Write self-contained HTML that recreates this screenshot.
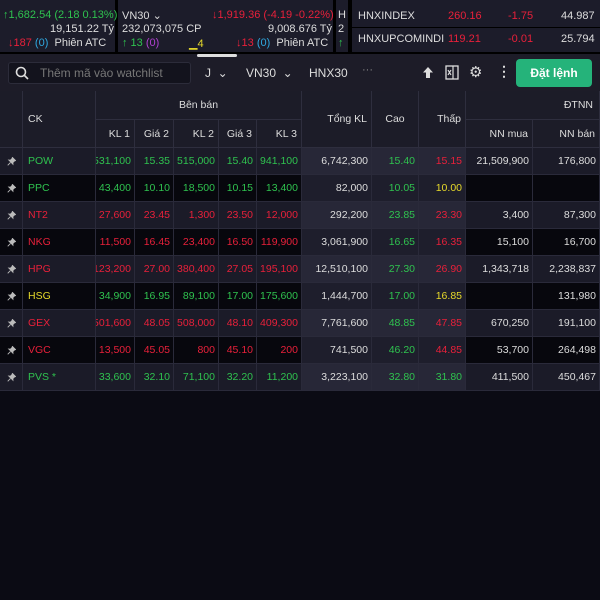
<!DOCTYPE html><html><head><meta charset="utf-8"><style>
*{margin:0;padding:0;box-sizing:border-box}
body{width:600px;height:600px;background:#0b0b14;font-family:"Liberation Sans",sans-serif;font-size:11px;color:#ddd;position:relative;overflow:hidden}
.a{position:absolute}
.p{background:#1c1c2a;position:absolute}
.g{color:#2fc24f}.r{color:#e8203a}.y{color:#e6d92a}.b{color:#2fa8e0}.v{color:#b040d0}
.row{position:absolute;left:0;width:600px;height:27px;display:flex;border-bottom:1px solid #2a2a3a;font-size:10.5px}
.row div{height:26px;line-height:26px;display:flex;justify-content:flex-end;padding-right:3px;border-right:1px solid #2a2a3a;white-space:nowrap;overflow:hidden}
.row div.ck{justify-content:flex-start;padding-left:5px}
.row div.pin{justify-content:center;align-items:center;padding:0}
.o{background:#1b1b28}.e{background:#07070d}
.o .m{background:#272737}.e .m{background:#1e1e2c}
.hd{position:absolute;border-right:1px solid #2e2e3e;border-bottom:1px solid #2e2e3e;text-align:center;color:#ddd;font-size:10.5px}
</style></head><body>
<svg width="0" height="0" style="position:absolute"><symbol id="pn" viewBox="0 0 10 10"><path d="M6 0.5L9.5 4 8.3 4.4 6.5 6.2 6.6 8 2 3.4 3.8 3.5 5.6 1.7Z M3.8 6.2L0.8 9.2" fill="#bbb" stroke="#bbb" stroke-width="1"/></symbol></svg>
<div class="a" style="left:0;top:0;width:600px;height:54px;background:#000"></div>
<div class="p" style="left:0;top:0;width:115px;height:52px"></div>
<div class="a g" style="left:3px;top:9px">↑1,682.54 (2.18 0.13%)</div>
<div class="a" style="left:50px;top:23px">19,151.22 Tỷ</div>
<div class="a" style="left:8px;top:37px"><span class="r">↓187</span> <span class="b">(0)</span> &nbsp;Phiên ATC</div>
<div class="p" style="left:118px;top:0;width:215px;height:52px"></div>
<div class="a" style="left:122px;top:9px">VN30 ⌄</div>
<div class="a r" style="left:212px;top:9px">↓1,919.36 (-4.19 -0.22%)</div>
<div class="a" style="left:122px;top:23px">232,073,075 CP</div>
<div class="a" style="left:268px;top:23px">9,008.676 Tỷ</div>
<div class="a" style="left:122px;top:37px"><span class="g">↑ 13</span> <span class="v">(0)</span></div>
<div class="a y" style="left:189px;top:37px">▁4</div>
<div class="a" style="left:236px;top:37px"><span class="r">↓13</span> <span class="b">(0)</span> &nbsp;Phiên ATC</div>
<div class="p" style="left:336px;top:0;width:12px;height:52px"></div>
<div class="a" style="left:338px;top:9px">H</div><div class="a" style="left:338px;top:23px">2</div><div class="a g" style="left:338px;top:37px">↑</div>
<div class="p" style="left:352px;top:0;width:248px;height:52px"></div>
<div class="a" style="left:352px;top:27px;width:248px;height:1px;background:#000"></div>
<div class="a" style="left:358px;top:10px">HNXINDEX</div><div class="a r" style="left:448px;top:10px">260.16</div><div class="a r" style="left:508px;top:10px">-1.75</div><div class="a" style="left:561px;top:10px">44.987</div>
<div class="a" style="left:358px;top:33px">HNXUPCOMINDI</div><div class="a r" style="left:448px;top:33px">119.21</div><div class="a r" style="left:508px;top:33px">-0.01</div><div class="a" style="left:561px;top:33px">25.794</div>
<div class="a" style="left:0;top:54px;width:600px;height:37px;background:#1d1c28"></div>
<div class="a" style="left:197px;top:54px;width:40px;height:3px;background:#ddd;border-radius:2px"></div>
<div class="a" style="left:8px;top:62px;width:183px;height:22px;background:#13131d;border:1px solid #2c2c3a;border-radius:3px"></div>
<svg class="a" style="left:15px;top:66px" width="14" height="14"><circle cx="6" cy="6" r="4.5" stroke="#ddd" stroke-width="1.6" fill="none"/><path d="M9.5 9.5L13 13" stroke="#ddd" stroke-width="1.6"/></svg>
<div class="a" style="left:40px;top:66px;color:#777;font-size:12px">Thêm mã vào watchlist</div>
<div class="a" style="left:205px;top:66px;font-size:12px">J &nbsp;⌄</div>
<div class="a" style="left:246px;top:66px;font-size:12px">VN30 &nbsp;⌄</div>
<div class="a" style="left:309px;top:66px;font-size:12px">HNX30</div>
<div class="a" style="left:362px;top:64px;color:#888">···</div>
<svg class="a" style="left:422px;top:66px" width="12" height="13"><path d="M6 1L1 6.5h3V12h4V6.5h3Z" fill="#ddd"/></svg>
<svg class="a" style="left:445px;top:65px" width="14" height="15"><rect x="1" y="1" width="12" height="13" fill="none" stroke="#ddd" stroke-width="1.3"/><path d="M8 1v13M3 5l3 5M6 5l-3 5" stroke="#ddd" stroke-width="1.2"/></svg>
<div class="a" style="left:469px;top:63px;font-size:15px">⚙</div>
<div class="a" style="left:497px;top:63px;font-size:14px;font-weight:bold">⋮</div>
<div class="a" style="left:516px;top:59px;width:76px;height:28px;background:#25b37a;border-radius:4px;text-align:center;line-height:28px;color:#fff;font-weight:bold;font-size:12px">Đặt lệnh</div>
<div class="a" style="left:0;top:91px;width:600px;height:57px;background:#1c1c28"></div>
<div class="hd" style="left:0;top:91px;width:23px;height:57px"></div>
<div class="hd" style="left:23px;top:91px;width:73px;height:57px;line-height:57px;text-align:left;padding-left:5px">CK</div>
<div class="hd" style="left:96px;top:91px;width:206px;height:29px;line-height:29px">Bên bán</div>
<div class="hd" style="left:96px;top:120px;width:39px;height:28px;line-height:28px;text-align:right;padding-right:4px">KL 1</div>
<div class="hd" style="left:135px;top:120px;width:39px;height:28px;line-height:28px;text-align:right;padding-right:4px">Giá 2</div>
<div class="hd" style="left:174px;top:120px;width:45px;height:28px;line-height:28px;text-align:right;padding-right:4px">KL 2</div>
<div class="hd" style="left:219px;top:120px;width:38px;height:28px;line-height:28px;text-align:right;padding-right:4px">Giá 3</div>
<div class="hd" style="left:257px;top:120px;width:45px;height:28px;line-height:28px;text-align:right;padding-right:4px">KL 3</div>
<div class="hd" style="left:302px;top:91px;width:70px;height:57px;line-height:57px;text-align:right;padding-right:4px">Tổng KL</div>
<div class="hd" style="left:372px;top:91px;width:47px;height:57px;line-height:57px">Cao</div>
<div class="hd" style="left:419px;top:91px;width:47px;height:57px;line-height:57px;text-align:right;padding-right:4px">Thấp</div>
<div class="hd" style="left:466px;top:91px;width:134px;height:29px;line-height:29px;text-align:right;padding-right:6px">ĐTNN</div>
<div class="hd" style="left:466px;top:120px;width:67px;height:28px;line-height:28px;text-align:right;padding-right:4px">NN mua</div>
<div class="hd" style="left:533px;top:120px;width:67px;height:28px;line-height:28px;text-align:right;padding-right:4px">NN bán</div>
<div class="row o" style="top:148px"><div class="pin" style="width:23px"><svg width="9" height="9"><use href="#pn"/></svg></div><div class="ck g" style="width:73px">POW</div><div class="g" style="width:39px">531,100</div><div class="g" style="width:39px">15.35</div><div class="g" style="width:45px">515,000</div><div class="g" style="width:38px">15.40</div><div class="g" style="width:45px">941,100</div><div class="m" style="width:70px">6,742,300</div><div class="m g" style="width:47px">15.40</div><div class="m r" style="width:47px">15.15</div><div style="width:67px">21,509,900</div><div style="width:67px">176,800</div></div>
<div class="row e" style="top:175px"><div class="pin" style="width:23px"><svg width="9" height="9"><use href="#pn"/></svg></div><div class="ck g" style="width:73px">PPC</div><div class="g" style="width:39px">43,400</div><div class="g" style="width:39px">10.10</div><div class="g" style="width:45px">18,500</div><div class="g" style="width:38px">10.15</div><div class="g" style="width:45px">13,400</div><div class="m" style="width:70px">82,000</div><div class="m g" style="width:47px">10.05</div><div class="m y" style="width:47px">10.00</div><div style="width:67px"></div><div style="width:67px"></div></div>
<div class="row o" style="top:202px"><div class="pin" style="width:23px"><svg width="9" height="9"><use href="#pn"/></svg></div><div class="ck r" style="width:73px">NT2</div><div class="r" style="width:39px">27,600</div><div class="r" style="width:39px">23.45</div><div class="r" style="width:45px">1,300</div><div class="r" style="width:38px">23.50</div><div class="r" style="width:45px">12,000</div><div class="m" style="width:70px">292,200</div><div class="m g" style="width:47px">23.85</div><div class="m r" style="width:47px">23.30</div><div style="width:67px">3,400</div><div style="width:67px">87,300</div></div>
<div class="row e" style="top:229px"><div class="pin" style="width:23px"><svg width="9" height="9"><use href="#pn"/></svg></div><div class="ck r" style="width:73px">NKG</div><div class="r" style="width:39px">11,500</div><div class="r" style="width:39px">16.45</div><div class="r" style="width:45px">23,400</div><div class="r" style="width:38px">16.50</div><div class="r" style="width:45px">119,900</div><div class="m" style="width:70px">3,061,900</div><div class="m g" style="width:47px">16.65</div><div class="m r" style="width:47px">16.35</div><div style="width:67px">15,100</div><div style="width:67px">16,700</div></div>
<div class="row o" style="top:256px"><div class="pin" style="width:23px"><svg width="9" height="9"><use href="#pn"/></svg></div><div class="ck r" style="width:73px">HPG</div><div class="r" style="width:39px">123,200</div><div class="r" style="width:39px">27.00</div><div class="r" style="width:45px">380,400</div><div class="r" style="width:38px">27.05</div><div class="r" style="width:45px">195,100</div><div class="m" style="width:70px">12,510,100</div><div class="m g" style="width:47px">27.30</div><div class="m r" style="width:47px">26.90</div><div style="width:67px">1,343,718</div><div style="width:67px">2,238,837</div></div>
<div class="row e" style="top:283px"><div class="pin" style="width:23px"><svg width="9" height="9"><use href="#pn"/></svg></div><div class="ck y" style="width:73px">HSG</div><div class="g" style="width:39px">34,900</div><div class="g" style="width:39px">16.95</div><div class="g" style="width:45px">89,100</div><div class="g" style="width:38px">17.00</div><div class="g" style="width:45px">175,600</div><div class="m" style="width:70px">1,444,700</div><div class="m g" style="width:47px">17.00</div><div class="m y" style="width:47px">16.85</div><div style="width:67px"></div><div style="width:67px">131,980</div></div>
<div class="row o" style="top:310px"><div class="pin" style="width:23px"><svg width="9" height="9"><use href="#pn"/></svg></div><div class="ck r" style="width:73px">GEX</div><div class="r" style="width:39px">501,600</div><div class="r" style="width:39px">48.05</div><div class="r" style="width:45px">508,000</div><div class="r" style="width:38px">48.10</div><div class="r" style="width:45px">409,300</div><div class="m" style="width:70px">7,761,600</div><div class="m g" style="width:47px">48.85</div><div class="m r" style="width:47px">47.85</div><div style="width:67px">670,250</div><div style="width:67px">191,100</div></div>
<div class="row e" style="top:337px"><div class="pin" style="width:23px"><svg width="9" height="9"><use href="#pn"/></svg></div><div class="ck r" style="width:73px">VGC</div><div class="r" style="width:39px">13,500</div><div class="r" style="width:39px">45.05</div><div class="r" style="width:45px">800</div><div class="r" style="width:38px">45.10</div><div class="r" style="width:45px">200</div><div class="m" style="width:70px">741,500</div><div class="m g" style="width:47px">46.20</div><div class="m r" style="width:47px">44.85</div><div style="width:67px">53,700</div><div style="width:67px">264,498</div></div>
<div class="row o" style="top:364px"><div class="pin" style="width:23px"><svg width="9" height="9"><use href="#pn"/></svg></div><div class="ck g" style="width:73px">PVS *</div><div class="g" style="width:39px">33,600</div><div class="g" style="width:39px">32.10</div><div class="g" style="width:45px">71,100</div><div class="g" style="width:38px">32.20</div><div class="g" style="width:45px">11,200</div><div class="m" style="width:70px">3,223,100</div><div class="m g" style="width:47px">32.80</div><div class="m g" style="width:47px">31.80</div><div style="width:67px">411,500</div><div style="width:67px">450,467</div></div>
</body></html>
